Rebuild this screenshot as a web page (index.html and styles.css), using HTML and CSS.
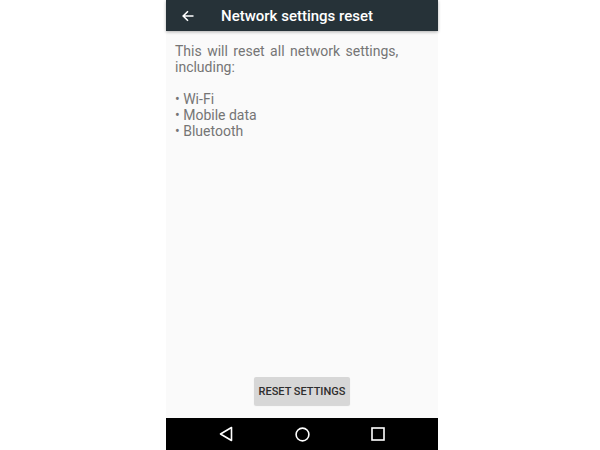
FILE: index.html
```html
<!DOCTYPE html>
<html>
<head>
<meta charset="utf-8">
<link rel="stylesheet" href="styles.css">
</head>
<body>
<div class="phone">
  <header class="appbar">
    <svg class="back" width="12" height="12" viewBox="0 0 12 12"><path d="M11.5 6H1.5M6 1.2L1.2 6L6 10.8" fill="none" stroke="#fff" stroke-width="1.6"/></svg>
    <span class="title">Network settings reset</span>
  </header>
  <main class="content">
    <p class="desc">This will reset all network settings,<br>including:</p>
    <ul class="list">
      <li>• Wi-Fi</li>
      <li>• Mobile data</li>
      <li>• Bluetooth</li>
    </ul>
    <div class="actions"><button class="btn">RESET SETTINGS</button></div>
  </main>
  <nav class="navbar">
    <svg width="14" height="16" viewBox="0 0 14 16"><path d="M12.5 1.5V14.5L1.5 8Z" fill="none" stroke="#fff" stroke-width="1.6" stroke-linejoin="round"/></svg>
    <svg width="15" height="15" viewBox="0 0 15 15"><circle cx="7.5" cy="7.5" r="6.4" fill="none" stroke="#fff" stroke-width="1.6"/></svg>
    <svg width="14" height="14" viewBox="0 0 14 14"><rect x="1" y="1" width="12" height="12" fill="none" stroke="#fff" stroke-width="1.6"/></svg>
  </nav>
</div>
</body>
</html>
```
FILE: styles.css
```css
html, body { margin: 0; padding: 0; background: #fff; }
body { font-family: Roboto, "Liberation Sans", sans-serif; }
.phone {
  margin-left: 166px;
  width: 272px;
  height: 450px;
  display: flex;
  flex-direction: column;
  background: #fafafa;
}
.appbar {
  height: 31px;
  background: #263238;
  display: flex;
  align-items: center;
  padding-left: 16px;
  box-shadow: 0 1px 3px rgba(0,0,0,0.3);
  position: relative;
  z-index: 1;
  flex: none;
}
.back { margin-right: 27px; }
.title { color: #fff; font-size: 15px; font-weight: 500; }
.content {
  flex: 1;
  display: flex;
  flex-direction: column;
  padding: 12px 9px 13px 9px;
  color: #757575;
  font-size: 14px;
  line-height: 16px;
}
.desc { margin: 0 0 16px 0; word-spacing: 2px; }
.list { list-style: none; margin: 0; padding: 0; }
.actions { margin-top: auto; display: flex; justify-content: center; }
.btn {
  width: 96px;
  height: 28px;
  border: none;
  border-radius: 2px;
  background: #d7d7d7;
  color: #2e2e2e;
  font-family: Roboto, sans-serif;
  font-weight: 500;
  font-size: 11px;
  padding: 0;
  box-shadow: 0 1px 1px rgba(0,0,0,0.15);
}
.navbar {
  height: 32px;
  background: #000;
  flex: none;
  display: flex;
  align-items: center;
  justify-content: space-between;
  padding: 0 53px 0 53px;
}
```
